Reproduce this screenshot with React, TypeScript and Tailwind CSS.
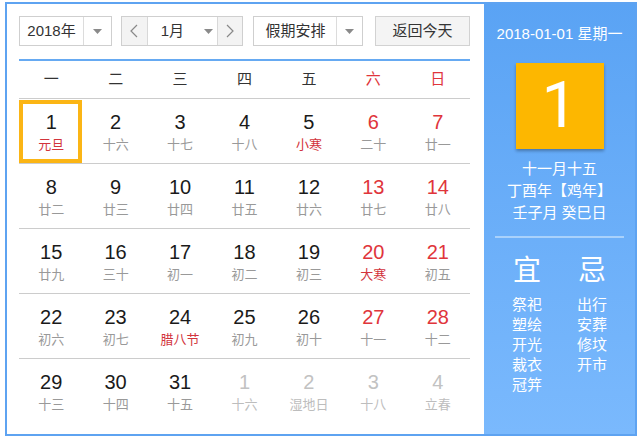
import React from "react";

type Day = { n: number; l: string; numRed?: boolean; lunarRed?: boolean; other?: boolean; sel?: boolean };

const rows: Day[][] = [
  [
    { n: 1, l: "元旦", lunarRed: true, sel: true },
    { n: 2, l: "十六" },
    { n: 3, l: "十七" },
    { n: 4, l: "十八" },
    { n: 5, l: "小寒", lunarRed: true },
    { n: 6, l: "二十", numRed: true },
    { n: 7, l: "廿一", numRed: true },
  ],
  [
    { n: 8, l: "廿二" },
    { n: 9, l: "廿三" },
    { n: 10, l: "廿四" },
    { n: 11, l: "廿五" },
    { n: 12, l: "廿六" },
    { n: 13, l: "廿七", numRed: true },
    { n: 14, l: "廿八", numRed: true },
  ],
  [
    { n: 15, l: "廿九" },
    { n: 16, l: "三十" },
    { n: 17, l: "初一" },
    { n: 18, l: "初二" },
    { n: 19, l: "初三" },
    { n: 20, l: "大寒", numRed: true, lunarRed: true },
    { n: 21, l: "初五", numRed: true },
  ],
  [
    { n: 22, l: "初六" },
    { n: 23, l: "初七" },
    { n: 24, l: "腊八节", lunarRed: true },
    { n: 25, l: "初九" },
    { n: 26, l: "初十" },
    { n: 27, l: "十一", numRed: true },
    { n: 28, l: "十二", numRed: true },
  ],
  [
    { n: 29, l: "十三" },
    { n: 30, l: "十四" },
    { n: 31, l: "十五" },
    { n: 1, l: "十六", other: true },
    { n: 2, l: "湿地日", other: true },
    { n: 3, l: "十八", other: true },
    { n: 4, l: "立春", other: true },
  ],
];

const weekdays = ["一", "二", "三", "四", "五", "六", "日"];

function Caret() {
  return (
    <svg width="9" height="5" viewBox="0 0 9 5">
      <path d="M0 0 L9 0 L4.5 5 Z" fill="#8a8a8a" />
    </svg>
  );
}

function Chevron({ dir }: { dir: "l" | "r" }) {
  return (
    <svg width="8" height="14" viewBox="0 0 8 14">
      <polyline
        points={dir === "l" ? "7,1 1,7 7,13" : "1,1 7,7 1,13"}
        fill="none"
        stroke="#888"
        strokeWidth="1.2"
      />
    </svg>
  );
}

export default function App() {
  const font = { fontFamily: '"Liberation Sans", "Noto Sans CJK SC", sans-serif' };
  return (
    <div className="w-[640px] h-[439px] bg-white" style={font}>
      <div className="ml-[5px] mt-[2px] w-[632px] h-[434px] border-2 border-[#5ea3f1] flex">
        {/* left panel */}
        <div className="w-[477px] h-full bg-white pl-[12px] pr-[14px] pt-[12px]">
          <div className="flex items-center h-[30px] text-[15px] text-[#333]">
            <div className="w-[93px] h-[30px] border border-[#cfcfcf] flex">
              <div className="w-[64px] flex items-center justify-center border-r border-[#dcdcdc]">2018年</div>
              <div className="flex-1 flex items-center justify-center">
                <Caret />
              </div>
            </div>
            <div className="ml-[9px] w-[123px] h-[30px] border border-[#cfcfcf] flex">
              <div className="w-[26px] bg-[#f3f3f3] border-r border-[#d8d8d8] flex items-center justify-center">
                <Chevron dir="l" />
              </div>
              <div className="w-[70px] flex items-center border-r border-[#d8d8d8]">
                <span className="ml-[13px]">1月</span>
                <span className="ml-[20px] flex">
                  <Caret />
                </span>
              </div>
              <div className="flex-1 bg-[#f3f3f3] flex items-center justify-center">
                <Chevron dir="r" />
              </div>
            </div>
            <div className="ml-[10px] w-[110px] h-[30px] border border-[#cfcfcf] flex">
              <div className="w-[83px] flex items-center justify-center border-r border-[#dcdcdc]">假期安排</div>
              <div className="flex-1 flex items-center justify-center">
                <Caret />
              </div>
            </div>
            <div className="ml-[12px] w-[95px] h-[30px] border border-[#d2d2d2] bg-[#f4f4f4] flex items-center justify-center">
              返回今天
            </div>
          </div>
          <div className="mt-[13px] h-[2px] bg-[#66aaf2]" />
          <div className="grid grid-cols-7 h-[37px] items-center text-[15px]">
            {weekdays.map((w, i) => (
              <div key={w} className={"text-center " + (i >= 5 ? "text-[#e0353b]" : "text-[#333]")}>
                {w}
              </div>
            ))}
          </div>
          {rows.map((row, ri) => (
            <div key={ri} className="grid grid-cols-7 h-[65px] border-t border-[#cccccc]">
              {row.map((d, ci) => {
                const numColor = d.other ? "text-[#c2c2c2]" : d.numRed ? "text-[#e0353b]" : "text-[#1a1a1a]";
                const lunColor = d.other ? "text-[#bdbdbd]" : d.lunarRed ? "text-[#d2343c]" : "text-[#999]";
                return (
                  <div key={ci} className="relative flex flex-col items-center pt-[11px]">
                    {d.sel && (
                      <div className="absolute left-0 top-[1px] w-[63px] h-[63px] border-[4px] border-[#fbb515]" />
                    )}
                    <div className={"text-[20px] leading-[24px] " + numColor}>{d.n}</div>
                    <div className={"text-[13px] leading-[20px] mt-[1px] " + lunColor}>{d.l}</div>
                  </div>
                );
              })}
            </div>
          ))}
        </div>
        {/* right panel */}
        <div className="flex-1 h-full bg-linear-to-b from-[#5aa3f4] to-[#7ab9fd] text-white flex flex-col items-center pt-[19px]">
          <div className="text-[15px] leading-[22px]">2018-01-01 星期一</div>
          <div className="mt-[18px] w-[88px] h-[86px] bg-[#fdb700] shadow-[0_2px_3px_rgba(0,0,0,0.3)] flex items-center justify-center">
            <span className="text-[64px] leading-none font-normal" style={{ fontFamily: 'Roboto, "Liberation Sans", sans-serif' }}>
              1
            </span>
          </div>
          <div className="mt-[9px] text-[15px] leading-[22px] text-center">
            <div>十一月十五</div>
            <div>丁酉年【鸡年】</div>
            <div>壬子月 癸巳日</div>
          </div>
          <div className="mt-[12px] w-[129px] h-[2px] bg-[#a9d1fb]" />
          <div className="mt-[15px] w-[130px] grid grid-cols-2 text-center">
            <div>
              <div className="text-[28px] leading-[36px]">宜</div>
              <div className="mt-[6px] text-[15px] leading-[20px]">
                <div>祭祀</div>
                <div>塑绘</div>
                <div>开光</div>
                <div>裁衣</div>
                <div>冠笄</div>
              </div>
            </div>
            <div>
              <div className="text-[28px] leading-[36px]">忌</div>
              <div className="mt-[6px] text-[15px] leading-[20px]">
                <div>出行</div>
                <div>安葬</div>
                <div>修坟</div>
                <div>开市</div>
              </div>
            </div>
          </div>
        </div>
      </div>
    </div>
  );
}
